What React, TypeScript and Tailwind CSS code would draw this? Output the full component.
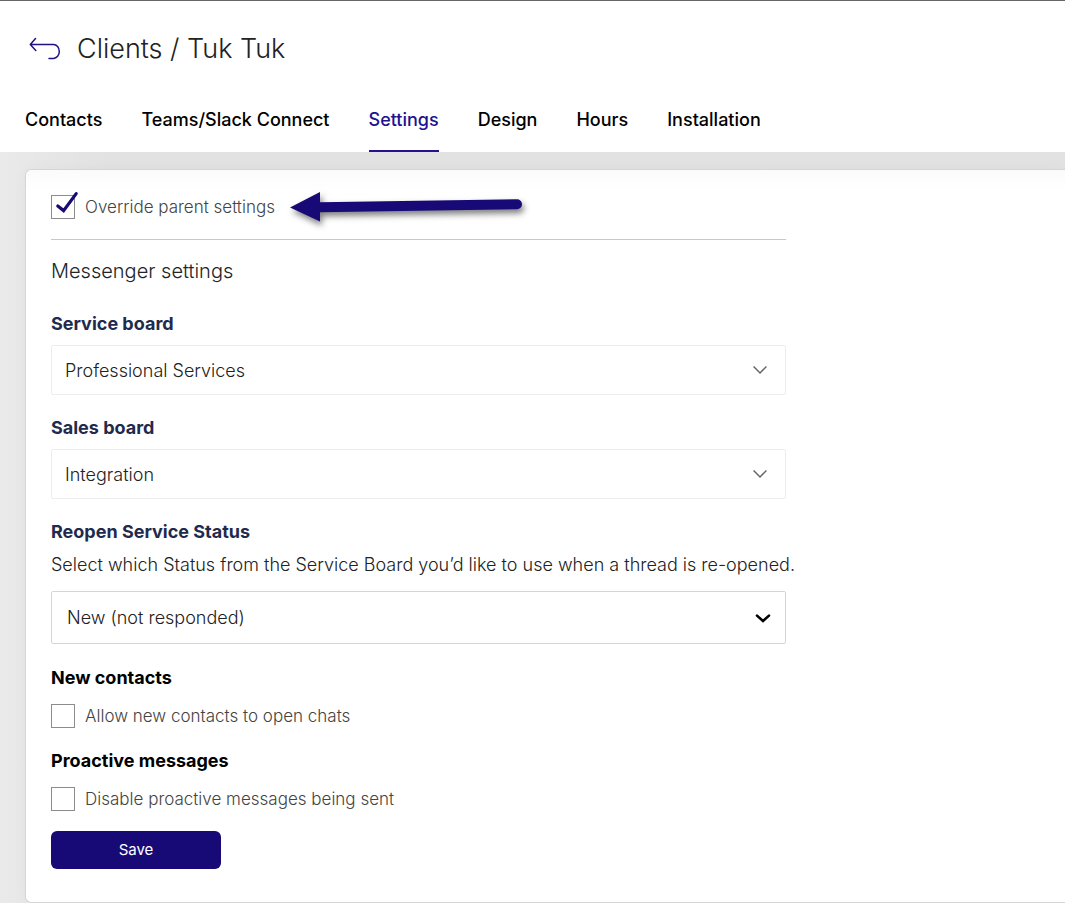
import { useState } from "react";
import clsx from "clsx";

const TABS = ["Contacts", "Teams/Slack Connect", "Settings", "Design", "Hours", "Installation"];

function BackIcon() {
  return (
    <svg width="32" height="24" viewBox="0 0 32 24" fill="none" stroke="#1f1286" strokeWidth="1.5" strokeLinecap="round" strokeLinejoin="round">
      <path d="M6.5 1.5 1.3 7.4 6.8 13.4M1.5 7.4H24.5a5.8 7 0 0 1 0 14H20" />
    </svg>
  );
}

function Chevron({ bold }: { bold?: boolean }) {
  return bold ? (
    <svg width="18" height="12" viewBox="0 0 18 12" fill="none" stroke="#000" strokeWidth="2.6" strokeLinecap="round" className="pointer-events-none absolute right-3.5 top-1/2 -translate-y-1/2">
      <path d="M3 3.6 9 9 15 3.6" />
    </svg>
  ) : (
    <svg width="16" height="12" viewBox="0 0 16 12" fill="none" stroke="#666" strokeWidth="1.5" className="pointer-events-none absolute right-4.5 top-1/2 -translate-y-1/2">
      <path d="M1.6 2.5 8 9 14.4 2.5" />
    </svg>
  );
}

function Arrow() {
  return (
    <svg width="240" height="44" viewBox="0 0 240 44" className="absolute left-60 -top-2 overflow-visible drop-shadow-[2px_4px_3px_rgba(0,0,0,0.5)]" aria-hidden="true">
      <path d="M-1 20.5 29 5V15.2L226 12.2a5 5 0 0 1 0 10L29 25.2V34.5Z" fill="#170a77" />
    </svg>
  );
}

type CheckProps = { id: string; label: string; checked: boolean; onChange: (v: boolean) => void };

function Check({ id, label, checked, onChange }: CheckProps) {
  return (
    <div className="relative flex h-6 items-center gap-2.5">
      <input
        id={id}
        type="checkbox"
        checked={checked}
        onChange={e => onChange(e.target.checked)}
        className="size-6 shrink-0 appearance-none border border-[#8c8c8c] bg-white"
      />
      {checked && (
        <svg width="30" height="30" viewBox="0 0 30 30" fill="none" stroke="#170a77" strokeWidth="3.2" strokeLinecap="round" className="pointer-events-none absolute -top-1.5 left-0">
          <path d="M6.8 17 12.6 21.6 25.2 4.6" />
        </svg>
      )}
      <label htmlFor={id} className="text-[17px] leading-6 font-light text-[#444]">{label}</label>
    </div>
  );
}

function BoardSelect({ id, label, value }: { id: string; label: string; value: string }) {
  return (
    <div className="mb-[21px]">
      <label htmlFor={id} className="mb-[9px] block text-[18px] leading-6 font-bold text-[#1f2a4d]">{label}</label>
      <div className="relative">
        <select id={id} className="block h-[50px] w-full appearance-none rounded-xs border border-[#ededed] bg-white px-[13px] text-[18px] font-light text-[#222]">
          <option>{value}</option>
        </select>
        <Chevron />
      </div>
    </div>
  );
}

export default function App() {
  const [tab, setTab] = useState("Settings");
  const [override, setOverride] = useState(true);
  const [allowNew, setAllowNew] = useState(false);
  const [disableProactive, setDisableProactive] = useState(false);

  return (
    <div className="min-h-screen overflow-hidden bg-linear-to-r from-[#eaeaea] to-[#e2e2e2] to-10% font-['Inter',sans-serif]">
      {/* Header */}
      <header className="relative z-10 border-t border-[#666] bg-white">
        <div className="flex items-center gap-4 px-[29px] pt-7">
          <a href="#clients" aria-label="Back to clients"><BackIcon /></a>
          <h1 className="text-[27px] leading-10 font-light text-[#222]">Clients / Tuk Tuk</h1>
        </div>
        <nav className="mt-[35px] flex gap-[39px] px-[25px]">
          {TABS.map(t => (
            <button
              key={t}
              onClick={() => setTab(t)}
              className={clsx(
                "border-b-2 pt-1 pb-[18px] text-[18px] leading-6 font-medium whitespace-nowrap",
                tab === t ? "border-[#22128f] text-[#22128f]" : "border-transparent text-black"
              )}
            >
              {t}
            </button>
          ))}
        </nav>
      </header>

      <main className="mt-[17px] ml-[25px]">
        <div className="rounded-l-md border-y border-l border-[#d5d5d5] bg-white bg-linear-to-b from-[#fbfbfb] to-white to-3% px-[25px] pt-[25px] pb-[33px] shadow-[0_0_16px_rgba(0,0,0,0.03)]">
          <form className="max-w-[735px]" onSubmit={e => e.preventDefault()}>
            <div className="relative border-b border-[#c8c8c8] pb-5">
              <Check id="override" label="Override parent settings" checked={override} onChange={setOverride} />
              <Arrow />
            </div>

            <h2 className="mt-[17px] mb-[27px] text-[20px] leading-7 font-light text-[#212529]">Messenger settings</h2>

            <BoardSelect id="service" label="Service board" value="Professional Services" />
            <BoardSelect id="sales" label="Sales board" value="Integration" />

            <label htmlFor="status" className="block text-[18px] leading-6 font-bold text-[#1f2a4d]">Reopen Service Status</label>
            <p className="mt-[9px] mb-[14px] text-[18px] leading-6 font-light text-[#222] lg:whitespace-nowrap">
              Select which Status from the Service Board you’d like to use when a thread is re-opened.
            </p>
            <div className="relative">
              <select id="status" className="block h-[53px] w-full appearance-none rounded-xs border border-[#d5d5d5] bg-white px-[15px] text-[18px] font-light text-[#222]">
                <option>New (not responded)</option>
              </select>
              <Chevron bold />
            </div>

            <h3 className="mt-[22px] mb-[14px] text-[18px] leading-6 font-bold text-black">New contacts</h3>
            <Check id="allow-new" label="Allow new contacts to open chats" checked={allowNew} onChange={setAllowNew} />

            <h3 className="mt-[21px] mb-[14px] text-[18px] leading-6 font-bold text-black">Proactive messages</h3>
            <Check id="disable-proactive" label="Disable proactive messages being sent" checked={disableProactive} onChange={setDisableProactive} />

            <button type="submit" className="mt-5 block h-[38px] w-[170px] rounded-md bg-[#170a77] text-[15px] text-white">Save</button>
          </form>
        </div>
      </main>
    </div>
  );
}
